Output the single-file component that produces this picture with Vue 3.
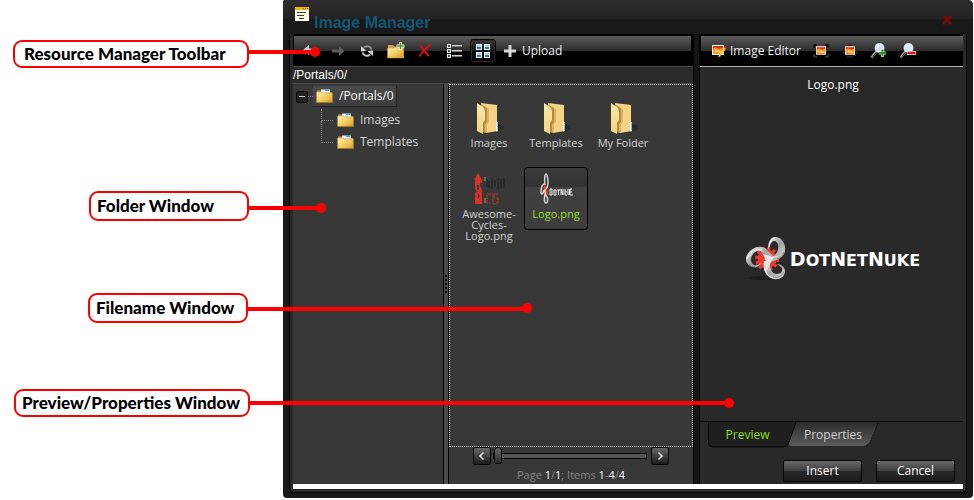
<script setup>
import { ref } from 'vue'

const view = ref('thumbs')
const tab = ref('preview')
const page = ref(0)
const selected = ref('Logo.png')

const folders = ['Images', 'Templates']
const files = [
  { name: 'Images', kind: 'folder' },
  { name: 'Templates', kind: 'folder' },
  { name: 'My Folder', kind: 'folder' },
  { name: 'Awesome-Cycles-Logo.png', kind: 'cycles' },
  { name: 'Logo.png', kind: 'logo' }
]
const callouts = [
  { id: 'toolbar-note', text: 'Resource Manager Toolbar' },
  { id: 'folder-note', text: 'Folder Window' },
  { id: 'filename-note', text: 'Filename Window' },
  { id: 'preview-note', text: 'Preview/Properties Window' }
]
</script>

<template>
  <div class="page">
    <svg class="defs" width="0" height="0" aria-hidden="true">
      <defs>
        <linearGradient id="gold" x1="0" y1="0" x2="1" y2="1">
          <stop offset="0" stop-color="#fff3b8" />
          <stop offset="0.5" stop-color="#f6cf62" />
          <stop offset="1" stop-color="#d8992a" />
        </linearGradient>
        <linearGradient id="manila" x1="0" y1="0" x2="0" y2="1">
          <stop offset="0" stop-color="#fdeaa8" />
          <stop offset="1" stop-color="#efd27c" />
        </linearGradient>
        <linearGradient id="steel" x1="0" y1="0" x2="1" y2="1">
          <stop offset="0" stop-color="#f4f4f4" />
          <stop offset="0.5" stop-color="#a2a2a2" />
          <stop offset="1" stop-color="#e8e8e8" />
        </linearGradient>
        <linearGradient id="tabfill" x1="0" y1="0" x2="0" y2="1">
          <stop offset="0" stop-color="#2e2e2e" />
          <stop offset="1" stop-color="#5c5c5c" />
        </linearGradient>
        <symbol id="folder-s" viewBox="0 0 17 14">
          <path d="M1 2.500V1.500h4L6.500 3H16v9H1z" fill="#d39a3c" />
          <path d="M5 .5h9v4H5z" fill="#e8f4fb" />
          <path d="M9 .5h4v1.500H9z" fill="#3fa0dc" />
          <path d="M.5 3h5L7 4h9.500v9.500H.5z" fill="url(#gold)" stroke="#b87c1b" stroke-width="0.500" />
        </symbol>
        <symbol id="folder-l" viewBox="0 0 32 32">
          <path d="M22 31l9-4-1-4-7-1z" fill="#222" opacity="0.600" />
          <path d="M8 1l16 2v17l1 1v8l-12 2z" fill="#f6d286" />
          <path d="M9 3l5 3v14l-2 3v8l-3-1z" fill="#b48a44" />
          <path d="M14 6l2 1v13l-2 2v8l-2 1v-8l2-3z" fill="#dcb263" />
          <path d="M4 1l6 4q2 2 2 5v8l-2 3v11L4 29z" fill="url(#manila)" />
          <path d="M23 20h2v9l-2 .5z" fill="#fff" />
          <path d="M24.500 21v7" stroke="#78b8dc" />
        </symbol>
        <symbol id="photo" viewBox="0 0 12 10">
          <path d="M0 0h12v10H0z" fill="#f4f1ea" />
          <path d="M1 1h10v8H1z" fill="#d4360f" />
          <path d="M1 3.500l3-1 3 1.500 4-1V9H1z" fill="#fb9d25" />
          <path d="M2 6l4-.5 5 1.500V8L6 7z" fill="#fff0a0" />
        </symbol>
        <symbol id="lens" viewBox="0 0 17 17">
          <path d="M1.500 15.500l5-6" stroke="#a5a5a5" stroke-width="2.500" />
          <path d="M2 15.500l5-6" stroke="#333" />
          <circle cx="9.500" cy="6" r="5" fill="#b9cdea" />
          <circle cx="9.500" cy="6" r="4" fill="#d6e4f7" stroke="#eef3fa" />
          <path d="M7 5c1-2 3-2 4-1" stroke="#fff" fill="none" />
        </symbol>
        <symbol id="gearmark" viewBox="0 0 42 46">
          <ellipse cx="16" cy="41" rx="14" ry="2" fill="#1c1c1c" />
          <circle cx="21" cy="22" r="9.500" fill="#ee3a2b" />
          <circle cx="21" cy="22" r="10.500" fill="none" stroke="#ee3a2b" stroke-width="3" stroke-dasharray="3 2.500" />
          <g fill="url(#steel)" fill-rule="evenodd">
            <path d="M22 13C22 6 24 0 29 0c7 0 11 7 10 14-1 5-5 8-9 9l-8 3-3-4c7-1 12-4 13-10 1-5-1-8-4-8-2 0-4 3-6 9z" />
            <path d="M20 19C17 15 12 12 8 16c-4 4-4 10 0 12 3 1 6-1 7-3 0 4-5 6-8 5-6-1-9-7-6-12 4-7 12-10 18-7l8 8z" />
            <path d="M24 24c-1 7 2 13 7 13 4 0 6-3 5-6l-5-4c5 0 8 4 8 7 0 6-6 9-11 8-7-1-12-8-10-18z" />
          </g>
          <path d="M16 16c5 3 10 4 16 3-5 2-7 4-8 9l-4 6c1-7 0-12-4-18z" fill="#e4e4e4" />
          <path d="M23 10C24 5 26 1 29 1M1 22c2-7 9-11 15-9M19 31c1 6 4 10 10 10" fill="none" stroke="#fff" />
          <path d="M38 15c-1 4-4 6-7 7M3 27c1 2 4 3 6 2M27 40c5 1 9-1 11-5" fill="none" stroke="#777" />
        </symbol>
      </defs>
    </svg>

    <section class="dialog" aria-label="Image Manager">
      <header class="titlebar">
        <svg width="16" height="16" viewBox="0 0 16 16" aria-hidden="true">
          <path d="M1 1h14v14H1z" fill="#fffff2" />
          <path d="M1 1h14v3H1z" fill="#f2b31a" />
          <path d="M9 2h1v1H9zM11 2h1v1h-1zM13 2h1v1h-1z" fill="#7a4b00" />
          <path d="M3 6.500h9M3 9.500h7M5 12.500h5" stroke="#234d1c" />
        </svg>
        <h1>Image Manager</h1>
        <button class="close" type="button" aria-label="Close">
          <svg width="10" height="10" viewBox="0 0 10 10"><path d="M1 1l8 8M9 1L1 9" stroke="#7c0a04" stroke-width="2.500" /></svg>
        </button>
      </header>

      <div class="frame">
        <div class="content">
          <div class="explorer">
            <div class="toolbar">
              <button type="button" aria-label="Back">
                <svg width="14" height="14" viewBox="0 0 14 14"><path d="M7 1L1 6l6 5V8h6V4.500H7z" fill="#cfcfcf" /></svg>
              </button>
              <button type="button" aria-label="Forward">
                <svg width="14" height="14" viewBox="0 0 14 14"><path d="M1 5.500h7V2l5.500 5L8 12V8.500H1z" fill="#5c5c5c" /></svg>
              </button>
              <button type="button" aria-label="Refresh">
                <svg width="14" height="14" viewBox="0 0 14 14" fill="none">
                  <path d="M11.500 5.500A4.500 4.500 0 0 0 4 3.500" stroke="#8f8f8f" stroke-width="2" />
                  <path d="M2.500 8.500A4.500 4.500 0 0 0 10 10.500" stroke="#c5c5c5" stroke-width="2" />
                  <path d="M1 7.500V2l5.500 5zM13 6.500V12L7.500 7z" fill="#d5d5d5" />
                </svg>
              </button>
              <button type="button" aria-label="New folder">
                <svg width="18" height="17" viewBox="0 0 18 17">
                  <path d="M1 5V3h5l2 2h9v11H1z" fill="#d9a24a" />
                  <path d="M.5 6h6L8 5h8.500v11H.5z" fill="url(#gold)" stroke="#c58b27" stroke-width=".5" />
                  <path d="M12 0h3v2.500h2.500v3H15V8h-3V5.500H9.500v-3H12z" fill="#f2f8e8" />
                  <path d="M13 1h1v2.500h2.500v1H14V7h-1V4.500h-2.500v-1H13z" fill="#4b9a26" stroke="#4b9a26" stroke-width=".5" />
                </svg>
              </button>
              <button type="button" aria-label="Delete">
                <svg width="14" height="14" viewBox="0 0 14 14"><path d="M2 1c2 3 6 8 9 11M12.500 1C8 4 4 8 1.500 12.500" stroke="#e00b0b" stroke-width="2" fill="none" /></svg>
              </button>
              <button type="button" aria-label="List view" @click="view = 'list'">
                <svg width="16" height="16" viewBox="0 0 16 16">
                  <path d="M1 1h4v4H1zM1 6h4v4H1zM1 11h4v4H1z" fill="#f2f2f2" />
                  <path d="M2 2h2v2H2zM2 7h2v2H2zM2 12h2v2H2z" fill="#3b4b60" />
                  <path d="M6 2.500h10M6 7.500h10M6 12.500h10" stroke="#d4d4d4" />
                  <path d="M6 3.500h10M6 8.500h10M6 13.500h10" stroke="#777" />
                </svg>
              </button>
              <button type="button" aria-label="Thumbnails view" :class="{ pressed: view === 'thumbs' }" @click="view = 'thumbs'">
                <svg width="16" height="16" viewBox="0 0 16 16">
                  <path d="M1 1h6v6H1zM9 1h6v6H9zM1 9h6v6H1zM9 9h6v6H9z" fill="#eef6fb" />
                  <path d="M2 2h4v2H2zM10 2h4v2h-4zM2 10h4v2H2zM10 10h4v2h-4z" fill="#a4d2f0" />
                  <path d="M2 4h4v2H2zM10 4h4v2h-4zM2 12h4v2H2zM10 12h4v2h-4z" fill="#3e7c8c" />
                </svg>
              </button>
              <button class="wide" type="button">
                <svg width="14" height="14" viewBox="0 0 14 14"><path d="M5.500 1h3v4.500H13v3H8.500V13h-3V8.500H1v-3h4.500z" fill="#d8d8d8" /></svg>
                Upload
              </button>
            </div>
            <div class="path">/Portals/0/</div>

            <div class="panes">
              <nav class="tree" aria-label="Folders">
                <div class="root">
                  <button class="toggle" type="button" aria-label="Collapse"><span></span></button>
                  <span class="dots"></span>
                  <a class="node current" href="#">
                    <svg width="17" height="14"><use href="#folder-s" /></svg>/Portals/0
                  </a>
                </div>
                <ul>
                  <li v-for="f in folders" :key="f">
                    <span class="branch"></span>
                    <a class="node" href="#"><svg width="17" height="14"><use href="#folder-s" /></svg>{{ f }}</a>
                  </li>
                </ul>
              </nav>

              <div class="splitter"><i v-for="n in 5" :key="n"></i></div>

              <div class="listing">
                <div class="files">
                  <button
                    v-for="f in files"
                    :key="f.name"
                    type="button"
                    class="file"
                    :class="{ selected: selected === f.name }"
                    @click="selected = f.name"
                  >
                    <svg v-if="f.kind === 'folder'" width="32" height="32"><use href="#folder-l" /></svg>
                    <svg v-else-if="f.kind === 'cycles'" width="32" height="32" viewBox="0 0 32 32">
                      <path d="M5 0l4 7v3l-2-1v4l2 4v14H2V20l2-2-2-2V9l1-2H1z" fill="#d93126" />
                      <path d="M4 12h2v5H4zM5 20l2 3-2 3z" fill="#383838" />
                      <path d="M14 6v8M16 8v7M19 5v11M22 7v7M25 5v11M28 6v9M31 5v10" stroke="#272727" stroke-width="1.500" />
                      <path d="M12 4v4M12 25v5" stroke="#999" />
                      <path d="M18 21h-4v9h3M20 20v11h3M25 21h-4v4h4v5h-3" stroke="#c93229" fill="none" stroke-dasharray="4 1" />
                    </svg>
                    <svg v-else width="34" height="32" viewBox="0 0 34 32">
                      <path d="M5 11l3 3 1 7-3 4-2-6z" fill="#ee3124" />
                      <path d="M6 12c-1-6 0-11 1-11s2 5 2 9-1 5-2 6M5 11c-2 1-3 5-3 8s2 3 3-2M6 16c0 6 1 7 2 8s1 6-1 6-2-5-1-9" fill="none" stroke="#d2d2d2" stroke-width="1.500" />
                      <path d="M11 16v6M11 16h2v6h-2M15 17h2v5h-2zM18 17h3M19.500 17v5M22 22v-6l2 6v-6M26 16v6h2M26 19h2M29 16v6M31 16l-1 6M33 16h-2v6h3M31 19h2" fill="none" stroke="#f5f5f5" />
                    </svg>
                    <span>{{ f.name }}</span>
                  </button>
                </div>
                <div class="pager">
                  <div class="slide">
                    <button type="button" aria-label="Previous page">
                      <svg width="8" height="10" viewBox="0 0 8 10"><path d="M5.500 1.500L2 5l3.500 3.500" fill="none" stroke="#eee" stroke-width="1.500" /></svg>
                    </button>
                    <input v-model="page" type="range" min="0" max="1" aria-label="Page" />
                    <button type="button" aria-label="Next page">
                      <svg width="8" height="10" viewBox="0 0 8 10"><path d="M2.500 1.500L6 5 2.500 8.500" fill="none" stroke="#eee" stroke-width="1.500" /></svg>
                    </button>
                  </div>
                  <p>Page <b>1</b>/<b>1</b>; Items <b>1</b>-<b>4</b>/<b>4</b></p>
                </div>
              </div>
            </div>
          </div>

          <div class="divider"></div>

          <div class="side">
            <div class="toolbar">
              <button class="wide" type="button">
                <svg width="16" height="14" viewBox="0 0 16 14">
                  <use href="#photo" x="1" y="1" width="12" height="10" />
                  <path d="M14.500 4L9 11" stroke="#e9cf2e" stroke-width="2" />
                  <path d="M15.500 2.500l-1.500 2" stroke="#d8281c" stroke-width="2" />
                  <path d="M7 13.500l1.500-3 1.500 1.500z" fill="#e6dd7b" />
                </svg>
                Image Editor
              </button>
              <button type="button" aria-label="Best fit">
                <svg width="16" height="14" viewBox="0 0 16 14">
                  <use href="#photo" x="3" y="2" width="10" height="9" />
                  <path d="M1 4V1h3M12 1h3v3M15 10v3h-3M4 13H1v-3" fill="none" stroke="#090909" stroke-width="1.500" />
                  <path d="M1 10v3h3M12 13h3v-3" fill="none" stroke="#555" />
                </svg>
              </button>
              <button type="button" aria-label="Actual size">
                <svg width="16" height="14" viewBox="0 0 16 14">
                  <path d="M5 2l3-2 3 2zM5 12l3 2 3-2zM2 4L0 7l2 3zM14 4l2 3-2 3z" fill="#111" stroke="#444" stroke-width=".5" />
                  <use href="#photo" x="3" y="2" width="10" height="9" />
                </svg>
              </button>
              <button type="button" aria-label="Zoom in">
                <svg width="17" height="17" viewBox="0 0 17 17">
                  <use href="#lens" width="17" height="17" />
                  <path d="M11 7h3v2.500h2v3h-2V15h-3v-2.500H9v-3h2z" fill="#dcefd4" />
                  <path d="M12.500 7.500v7M9 11h7" stroke="#2f9a25" stroke-width="2" />
                </svg>
              </button>
              <button type="button" aria-label="Zoom out">
                <svg width="17" height="17" viewBox="0 0 17 17">
                  <use href="#lens" width="17" height="17" />
                  <path d="M8 9h9v4H8z" fill="#f4dede" />
                  <path d="M8.500 11h8" stroke="#d31818" stroke-width="2.500" />
                </svg>
              </button>
            </div>

            <div class="preview">
              <p>Logo.png</p>
              <div class="logo">
                <svg width="42" height="46" aria-hidden="true"><use href="#gearmark" /></svg>
                <span class="wordmark"><b>D</b>OT<b>N</b>ET<b>N</b>UKE</span>
              </div>
            </div>

            <div class="tabs">
              <button type="button" class="tab first" :class="{ on: tab === 'preview' }" @click="tab = 'preview'">
                <svg width="90" height="26" viewBox="0 0 90 26" aria-hidden="true">
                  <path d="M.5 0v20q0 5 5 5H74q5 0 7-5L88 0" fill="#1f1f1f" stroke="#050505" />
                </svg>
                <span>Preview</span>
              </button>
              <button type="button" class="tab" :class="{ on: tab === 'properties' }" @click="tab = 'properties'">
                <svg width="92" height="26" viewBox="0 0 92 26" aria-hidden="true">
                  <path d="M8 1h83l-7 17q-3 6-8 6H5q-5 0-3-6z" fill="url(#tabfill)" />
                  <path d="M91 1l-7 17q-2 5-6 6" fill="none" stroke="#111" stroke-dasharray="2 1" />
                </svg>
                <span>Properties</span>
              </button>
            </div>
            <footer class="actions">
              <button type="button">Insert</button>
              <button type="button">Cancel</button>
            </footer>
          </div>
        </div>
        <div class="strip"></div>
      </div>
    </section>

    <svg class="leads" width="974" height="500" viewBox="0 0 974 500" aria-hidden="true">
      <path d="M248 52h67M248 208h73M247 309h280M249 403h480" stroke="#f00" stroke-width="4" />
      <g fill="#f00">
        <circle cx="315" cy="52" r="5" />
        <circle cx="321" cy="208" r="5" />
        <circle cx="527" cy="308" r="5" />
        <circle cx="729" cy="403" r="5" />
      </g>
    </svg>
    <div v-for="c in callouts" :key="c.id" class="callout" :class="c.id">{{ c.text }}</div>
  </div>
</template>

<style>
body {
  background: #fff;
}
</style>

<style scoped>
* {
  box-sizing: border-box;
}
.page {
  position: relative;
  display: flex;
  min-height: 100vh;
  padding: 0 1px 2px 283px;
  font-family: "Open Sans", "Noto Sans", sans-serif;
  font-size: 12px;
  line-height: 16px;
  color: #f0f0f0;
}
.defs {
  position: absolute;
}
button {
  padding: 0;
  border: 0;
  background: none;
  color: inherit;
  font: inherit;
}
a {
  color: inherit;
  text-decoration: none;
}
p,
h1,
ul {
  margin: 0;
  padding: 0;
}
.dialog {
  flex: 1;
  display: flex;
  flex-direction: column;
  background: #191919;
  border-radius: 2px 5px 4px 4px;
  overflow: hidden;
}
.titlebar {
  display: flex;
  align-items: flex-start;
  height: 34px;
  padding: 6px 20px 0 11px;
  background: linear-gradient(#2e2e2e, #222 19px, #191919 19px);
}
h1 {
  flex: 1;
  margin: 7px 0 0 4px;
  font: bold 16px/20px "Liberation Sans", Arial, sans-serif;
  color: #0f5878;
}
.close {
  display: flex;
  padding: 9px 1px;
}
.frame {
  flex: 1;
  display: flex;
  flex-direction: column;
  margin: 0 6px 5px;
  padding: 0 3px 3px;
  border: 1px solid #000;
  border-top: 0;
  border-radius: 0 0 4px 4px;
  background: #292929;
}
.content {
  flex: 1;
  display: grid;
  grid-template-columns: 1fr 7px 263px;
}
.strip {
  height: 5px;
  background: #fff;
}
.explorer,
.side,
.listing {
  display: flex;
  flex-direction: column;
}
.divider {
  border: solid #000;
  border-width: 0 1px;
  background: #151515;
}
.toolbar {
  display: flex;
  align-items: center;
  gap: 3px;
  height: 32px;
  padding: 0 2px;
  border: 2px solid #000;
  border-bottom-width: 1px;
  border-left-width: 1px;
  background: linear-gradient(#5c5c5c, #2b2b2b 15px, #000 15px);
}
.toolbar button {
  display: flex;
  align-items: center;
  justify-content: center;
  width: 26px;
  height: 24px;
}
.toolbar .pressed {
  border: 1px solid #050505;
  border-radius: 3px;
  background: linear-gradient(#3a3a3a, #111 12px, #000 12px);
  box-shadow: inset 0 0 0 1px #2c2c2c;
}
.toolbar .wide {
  width: auto;
  gap: 5px;
  padding: 0 4px;
}
.side .toolbar {
  border-right: 0;
  padding-left: 6px;
}
.side .wide {
  gap: 3px;
}
.path {
  height: 18px;
  border: solid #4a4a4a;
  border-width: 1px 0;
  background: #2b2b2b;
  font: 12px/16px "Liberation Sans", Arial, sans-serif;
  color: #fff;
}
.panes {
  flex: 1;
  display: grid;
  grid-template-columns: 150px 6px 1fr;
  background: #383838;
}
.tree {
  padding: 2px 0 0 3px;
}
.root,
.node,
.tree li {
  display: flex;
  align-items: center;
}
.toggle {
  display: flex;
  align-items: center;
  justify-content: center;
  width: 12px;
  height: 12px;
  border: 1px solid #0c0c0c;
  border-radius: 2px;
  background: #202020;
}
.toggle span {
  width: 6px;
  height: 1px;
  background: #ccc;
}
.dots {
  width: 5px;
  border-top: 1px dotted #8a8a8a;
}
.node {
  gap: 6px;
  height: 22px;
  padding: 0 4px;
  color: #d6d6d6;
}
.node.current {
  height: 21px;
  padding: 0 2px 0 3px;
  border: solid #242424;
  border-width: 0 1px 1px 0;
  background: linear-gradient(#4a4a4a, #3e3e3e);
  color: #fff;
}
.tree ul {
  margin: 2px 0 0 25px;
  list-style: none;
}
.branch {
  align-self: flex-start;
  width: 12px;
  height: 12px;
  border: dotted #858585;
  border-width: 0 0 1px 1px;
}
li + li .branch {
  height: 22px;
  margin-top: -10px;
}
.splitter {
  display: flex;
  flex-direction: column;
  align-items: center;
  justify-content: center;
  gap: 2px;
  border: solid #000;
  border-width: 0 1px;
  background: #4b4b4b;
}
.splitter i {
  width: 2px;
  height: 2px;
  background: #000;
}
.files {
  flex: 1;
  display: grid;
  grid-template-columns: repeat(auto-fill, 64px);
  align-content: start;
  align-items: start;
  gap: 8px 3px;
  padding: 11px 7px;
  border: 1px dotted #d8d8d8;
}
.file {
  display: flex;
  flex-direction: column;
  align-items: center;
  gap: 3px;
  min-height: 63px;
  padding-top: 6px;
  border-radius: 4px;
  font-size: 11px;
  line-height: 11px;
  color: #d2d2d2;
}
.file.selected {
  background: linear-gradient(#3c3c3c, #333 20px, #424242 20px, #3c3c3c);
  box-shadow: inset 0 0 0 1px #000;
  color: #9ade2a;
}
.pager {
  display: flex;
  flex-direction: column;
  align-items: center;
  gap: 2px;
  height: 37px;
  font-size: 11px;
  color: #858585;
}
.pager b {
  font-weight: 400;
  color: #fff;
}
.slide {
  display: flex;
  align-items: center;
}
.slide button {
  display: flex;
  align-items: center;
  justify-content: center;
  width: 18px;
  height: 18px;
  border: 1px solid #080808;
  border-radius: 2px;
  background: linear-gradient(#666, #1c1c1c);
}
.slide input {
  appearance: none;
  width: 154px;
  height: 18px;
  margin: 0 4px 0 2px;
  background: none;
}
.slide input::-webkit-slider-runnable-track {
  height: 6px;
  border: 1px solid #050505;
  background: #575757;
}
.slide input::-webkit-slider-thumb {
  appearance: none;
  width: 8px;
  height: 17px;
  margin-top: -7px;
  border: 1px solid #080808;
  border-radius: 4px 4px 2px 2px;
  background: linear-gradient(#6a6a6a, #2c2c2c);
}
.side {
  background: #292929;
}
.preview {
  flex: 1;
  display: flex;
  flex-direction: column;
  padding-left: 3px;
  border-top: 1px solid #b0b0b5;
  border-bottom: 1px solid #0c0c0c;
}
.preview p {
  padding-top: 10px;
  text-align: center;
  color: #fff;
}
.logo {
  flex: 1;
  display: flex;
  align-items: center;
  justify-content: center;
  gap: 2px;
  padding-top: 6px;
}
.wordmark {
  font: bold 16px/20px "DejaVu Sans", sans-serif;
  color: #fff;
}
.wordmark b {
  font-size: 19px;
}
.tabs {
  display: flex;
  height: 26px;
  padding-left: 8px;
}
.tab {
  position: relative;
  width: 79px;
  color: #cfcfcf;
}
.tab + .tab {
  width: 92px;
}
.tab.first {
  z-index: 1;
}
.tab svg {
  position: absolute;
  left: 0;
  top: 0;
}
.tab span {
  position: relative;
}
.tab.on {
  color: #8fdc1f;
}
.actions {
  display: flex;
  justify-content: flex-end;
  gap: 14px;
  padding: 12px 8px 2px;
}
.actions button {
  width: 79px;
  height: 22px;
  border: 1px solid #060606;
  border-radius: 2px;
  background: linear-gradient(#6a6a6a, #3c3c3c 10px, #282828 10px, #1c1c1c);
  color: #fff;
}
.leads {
  position: absolute;
  left: 0;
  top: 0;
  pointer-events: none;
}
.callout {
  position: absolute;
  display: flex;
  align-items: center;
  width: 160px;
  height: 30px;
  padding-left: 6px;
  border: 2px solid #f00;
  border-radius: 9px;
  background: #fff;
  color: #000;
  font: 900 17px/20px Lato, sans-serif;
  white-space: nowrap;
}
.toolbar-note {
  left: 13px;
  top: 40px;
  width: 236px;
  height: 28px;
  padding-left: 9px;
}
.folder-note {
  left: 89px;
  top: 191px;
}
.filename-note {
  left: 88px;
  top: 293px;
}
.preview-note {
  left: 14px;
  top: 389px;
  width: 236px;
  height: 28px;
}
</style>
